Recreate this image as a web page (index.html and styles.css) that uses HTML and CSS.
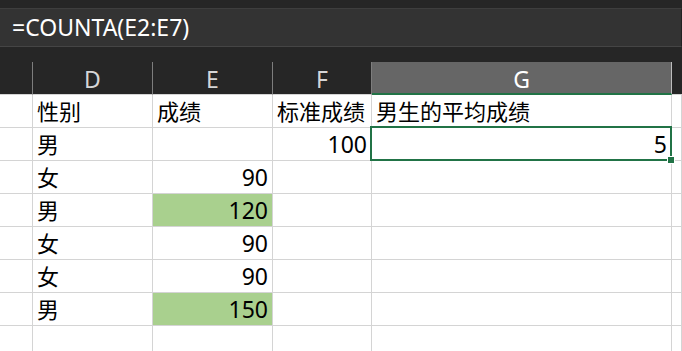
FILE: index.html
```html
<!DOCTYPE html>
<html lang="zh-CN">
<head>
    <meta charset="UTF-8">
    <title>COUNTA</title>
    <link rel="stylesheet" href="styles.css">
</head>
<body>

    <div class="topbar"></div>
    <div class="formula-bar">=COUNTA(E2:E7)</div>
    <div class="gap"></div>

    <div class="sheet">
        <div class="head"></div>
        <div class="head">D</div>
        <div class="head">E</div>
        <div class="head">F</div>
        <div class="head active">G</div>
        <div class="head last"></div>

        <div class="cell"></div>
        <div class="cell">性别</div>
        <div class="cell">成绩</div>
        <div class="cell">标准成绩</div>
        <div class="cell">男生的平均成绩</div>
        <div class="cell"></div>

        <div class="cell"></div>
        <div class="cell">男</div>
        <div class="cell"></div>
        <div class="cell num">100</div>
        <div class="cell num selected">5<span class="sel-box"><span class="handle"></span></span></div>
        <div class="cell"></div>

        <div class="cell"></div>
        <div class="cell">女</div>
        <div class="cell num">90</div>
        <div class="cell"></div>
        <div class="cell"></div>
        <div class="cell"></div>

        <div class="cell"></div>
        <div class="cell">男</div>
        <div class="cell num hl">120</div>
        <div class="cell"></div>
        <div class="cell"></div>
        <div class="cell"></div>

        <div class="cell"></div>
        <div class="cell">女</div>
        <div class="cell num">90</div>
        <div class="cell"></div>
        <div class="cell"></div>
        <div class="cell"></div>

        <div class="cell"></div>
        <div class="cell">女</div>
        <div class="cell num">90</div>
        <div class="cell"></div>
        <div class="cell"></div>
        <div class="cell"></div>

        <div class="cell"></div>
        <div class="cell">男</div>
        <div class="cell num hl">150</div>
        <div class="cell"></div>
        <div class="cell"></div>
        <div class="cell"></div>

        <div class="cell"></div>
        <div class="cell"></div>
        <div class="cell"></div>
        <div class="cell"></div>
        <div class="cell"></div>
        <div class="cell"></div>
    </div>

</body>
</html>
```

FILE: styles.css
```css
body {
    margin: 0;
    width: 682px;
    height: 351px;
    overflow: hidden;
    background: #ffffff;
    font-family: "Noto Sans", "Noto Sans CJK SC", sans-serif;
}
.topbar {
    height: 8px;
    background: #262626;
}
.formula-bar {
    height: 37px;
    border-top: 1px solid #3e3e3e;
    border-bottom: 1px solid #454545;
    border-right: 1px solid #222222;
    background: #333333;
    color: #ffffff;
    font-size: 23px;
    line-height: 36px;
    padding-left: 12px;
}
.gap {
    height: 15px;
    background: #262626;
}
.sheet {
    display: grid;
    grid-template-columns: 33px 120px 120px 99px 300px 10px;
    grid-auto-rows: 33px;
}
.head {
    background: #262626;
    color: #d6d6d6;
    font-size: 23px;
    text-align: center;
    line-height: 34px;
    border-right: 1px solid #7d7d7d;
    border-bottom: 1px solid #d4d4d4;
    overflow: hidden;
}
.head.active {
    background: #666666;
    color: #ffffff;
    border-right-color: #bdbdbd;
    border-bottom: 2px solid #217346;
}
.head.last {
    border-right: none;
}
.cell {
    position: relative;
    border-right: 1px solid #d4d4d4;
    border-bottom: 1px solid #d4d4d4;
    font-size: 22px;
    line-height: 32px;
    padding: 0 4px;
    color: #000000;
    white-space: nowrap;
}
.num {
    text-align: right;
    font-size: 23px;
}
.hl {
    background: #a9d08e;
}
.selected {
    z-index: 1;
}
.sel-box {
    position: absolute;
    top: -2px;
    left: -2px;
    right: -1px;
    bottom: -1px;
    border: 2px solid #217346;
}
.handle {
    position: absolute;
    right: -5px;
    bottom: -5px;
    width: 6px;
    height: 6px;
    background: #217346;
    border: 1px solid #ffffff;
}
```
